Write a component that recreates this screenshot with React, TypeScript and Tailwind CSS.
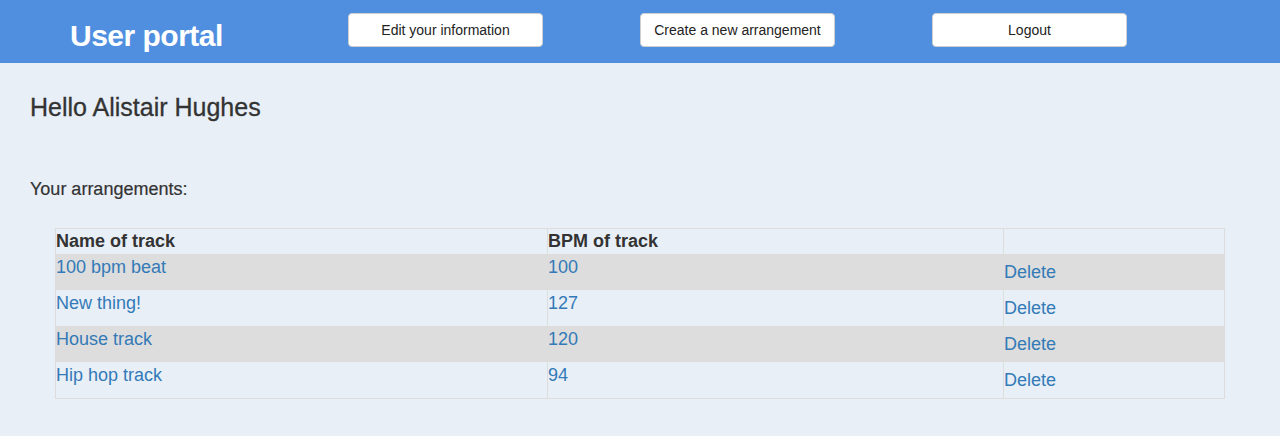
import React from 'react';

const tracks = [
  { name: '100 bpm beat', bpm: 100 },
  { name: 'New thing!', bpm: 127 },
  { name: 'House track', bpm: 120 },
  { name: 'Hip hop track', bpm: 94 },
];

const navButtons = ['Edit your information', 'Create a new arrangement', 'Logout'];

export default function App() {
  return (
    <div className="min-h-[436px] bg-[#e8eff7] font-['Liberation_Sans',Arial,sans-serif] text-[#333]">
      {/* Header */}
      <header className="flex h-[63px] items-start bg-[#508fdf] pl-[70px]">
        <h1 className="mt-[21px] w-[278px] text-[30px] leading-[30px] font-bold tracking-[-0.5px] text-white">User portal</h1>
        <nav className="flex gap-[97px]">
          {navButtons.map((label) => (
            <button
              key={label}
              className="mt-[13px] h-[34px] w-[195px] rounded-[4px] border border-[#cfcfcf] bg-white text-[14px] text-[#222]"
            >
              {label}
            </button>
          ))}
        </nav>
      </header>

      {/* Content */}
      <main className="px-[30px] pt-[31px] pb-[37px]">
        <h2 className="text-[25px] leading-[26px] [-webkit-text-stroke:0.3px_#333]">Hello Alistair Hughes</h2>
        <p className="mt-[57px] text-[18px] leading-[24px] [-webkit-text-stroke:0.2px_#333]">Your arrangements:</p>

        <table className="mx-[25px] mt-[27px] w-[1170px] table-fixed border border-[#dddddd] text-[18px] leading-[24px]">
          <colgroup>
            <col className="w-[492px]" />
            <col className="w-[456px]" />
            <col />
          </colgroup>
          <thead>
            <tr className="h-[25px]">
              <th className="p-0 text-left align-top font-bold">Name of track</th>
              <th className="border-l border-[#dddddd] p-0 text-left align-top font-bold">BPM of track</th>
              <th className="border-l border-[#dddddd] p-0"></th>
            </tr>
          </thead>
          <tbody>
            {tracks.map((t, i) => (
              <tr key={t.name} className={i % 2 === 0 ? 'bg-[#dddddd]' : ''}>
                <td className="p-0 pt-[1px] align-top">
                  <a href="#" className="text-[#337ab7]">{t.name}</a>
                </td>
                <td className="border-l border-[#dddddd] p-0 pt-[1px] align-top">
                  <a href="#" className="text-[#337ab7]">{t.bpm}</a>
                </td>
                <td className="border-l border-[#dddddd] p-0 align-top">
                  <a href="#" className="inline-block pt-[6px] pb-[6px] text-[#337ab7]">Delete</a>
                </td>
              </tr>
            ))}
          </tbody>
        </table>
      </main>
    </div>
  );
}
